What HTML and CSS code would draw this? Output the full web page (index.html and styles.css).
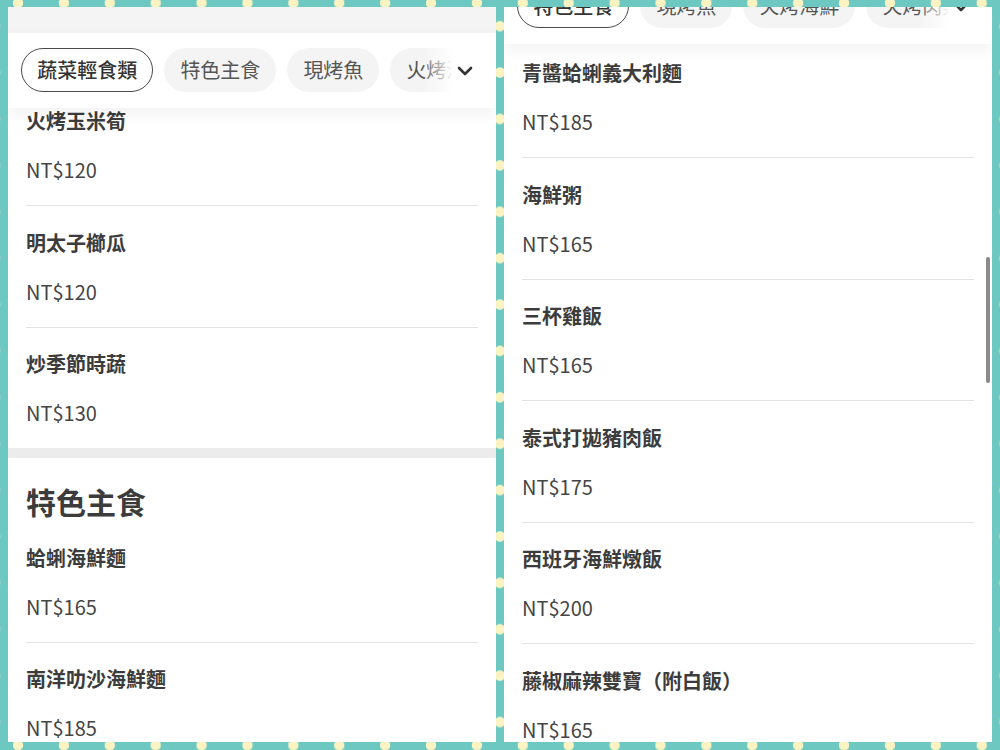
FILE: index.html
```html
<!DOCTYPE html>
<html lang="zh-Hant">
<head>
<meta charset="utf-8">
<title>菜單</title>
<link rel="stylesheet" href="styles.css">
</head>
<body>
<div class="frame">
  <section class="panel">
    <div class="page-top"></div>
    <header class="tabs">
      <div class="tab-track">
        <span class="chip chip--active">蔬菜輕食類</span>
        <span class="chip">特色主食</span>
        <span class="chip">現烤魚</span>
        <span class="chip">火烤海鮮</span>
        <span class="chip">火烤肉類</span>
      </div>
      <div class="tabs-fade">
        <svg class="chevron" width="16" height="10" viewBox="0 0 16 10"><path d="M2 2 L8 8 L14 2" fill="none" stroke="#333" stroke-width="2.6" stroke-linecap="round" stroke-linejoin="round"/></svg>
      </div>
    </header>
    <div class="menu menu--left">
      <section class="cat">
        <div class="item"><div class="item-name">火烤玉米筍</div><div class="item-price">NT$120</div></div>
        <div class="item"><div class="item-name">明太子櫛瓜</div><div class="item-price">NT$120</div></div>
        <div class="item"><div class="item-name">炒季節時蔬</div><div class="item-price">NT$130</div></div>
      </section>
      <section class="cat cat--titled">
        <h2 class="cat-title">特色主食</h2>
        <div class="item"><div class="item-name">蛤蜊海鮮麵</div><div class="item-price">NT$165</div></div>
        <div class="item"><div class="item-name">南洋叻沙海鮮麵</div><div class="item-price">NT$185</div></div>
      </section>
    </div>
  </section>

  <section class="panel">
    <header class="tabs tabs--scrolled">
      <div class="tab-track">
        <span class="chip chip--active">特色主食</span>
        <span class="chip">現烤魚</span>
        <span class="chip">火烤海鮮</span>
        <span class="chip">火烤肉類</span>
      </div>
      <div class="tabs-fade">
        <svg class="chevron" width="16" height="10" viewBox="0 0 16 10"><path d="M2 2 L8 8 L14 2" fill="none" stroke="#333" stroke-width="2.6" stroke-linecap="round" stroke-linejoin="round"/></svg>
      </div>
    </header>
    <div class="menu menu--right">
      <section class="cat">
        <div class="item"><div class="item-name">青醬蛤蜊義大利麵</div><div class="item-price">NT$185</div></div>
        <div class="item"><div class="item-name">海鮮粥</div><div class="item-price">NT$165</div></div>
        <div class="item"><div class="item-name">三杯雞飯</div><div class="item-price">NT$165</div></div>
        <div class="item"><div class="item-name">泰式打拋豬肉飯</div><div class="item-price">NT$175</div></div>
        <div class="item"><div class="item-name">西班牙海鮮燉飯</div><div class="item-price">NT$200</div></div>
        <div class="item"><div class="item-name">藤椒麻辣雙寶（附白飯）</div><div class="item-price">NT$165</div></div>
      </section>
    </div>
    <div class="scrollbar"></div>
  </section>
</div>
</body>
</html>
```

FILE: styles.css
```css
* { box-sizing: border-box; }

html, body {
  margin: 0;
  height: 100%;
}

body {
  background-color: #6dc8c1;
  background-image:
    radial-gradient(circle at center, #fbf4c2 0, #fbf4c2 4.8px, rgba(251,244,194,0) 5.6px),
    radial-gradient(circle at center, #fbf4c2 0, #fbf4c2 4.8px, rgba(251,244,194,0) 5.6px);
  background-size: 45.9px 46.4px, 45.9px 46.4px;
  background-position: -4.95px -20.2px, 18.05px 3px;
  font-family: "Noto Sans CJK TC", "Noto Sans", sans-serif;
  color: #3c3c3c;
}

.frame {
  height: 750px;
  padding: 7px 8px 8px;
  display: grid;
  grid-template-columns: 1fr 1fr;
  column-gap: 8px;
}

.panel {
  position: relative;
  background: #fff;
  overflow: hidden;
  height: 735px;
}

.page-top {
  height: 26px;
  background: #f4f4f4;
}

.tabs {
  position: relative;
  z-index: 2;
  height: 75px;
  padding: 15px 0 16px 13px;
  background: #fff;
  box-shadow: 0 6px 14px rgba(0, 0, 0, 0.055);
}

.tabs--scrolled {
  margin-top: -38px;
}

.tab-track {
  display: flex;
  gap: 11px;
  overflow: hidden;
  white-space: nowrap;
}

.chip {
  flex-shrink: 0;
  height: 44px;
  padding: 0 16px;
  border-radius: 22px;
  background: #f4f4f4;
  color: #555;
  font-size: 20px;
  line-height: 44px;
  font-weight: 400;
}

.chip--active {
  background: #fff;
  border: 1.3px solid #4a4a4a;
  padding: 0 15.2px;
  line-height: 41.4px;
  color: #333;
  font-weight: 500;
}

.tabs-fade {
  position: absolute;
  top: 0;
  right: 0;
  bottom: 0;
  width: 74px;
  display: flex;
  align-items: center;
  justify-content: flex-end;
  padding-right: 23px;
  background: linear-gradient(to right, rgba(255,255,255,0) 0%, #fff 42%);
}

.chevron {
  display: block;
}

.menu {
  position: relative;
  z-index: 1;
}

.menu--left {
  margin-top: -23.5px;
}

.menu--right {
  margin-top: -7.5px;
}

.cat {
  padding: 0 18px 0 18px;
}

.cat--titled {
  border-top: 10px solid #ececec;
  padding-top: 23px;
}

.cat-title {
  margin: 0;
  font-size: 30px;
  line-height: 40px;
  font-weight: 700;
  color: #3c3c3c;
}

.item {
  padding: 23.5px 0 22px;
  border-bottom: 1px solid #e3e3e3;
  display: flex;
  flex-direction: column;
  gap: 23px;
}

.item:last-child {
  border-bottom: none;
}

.item-name {
  font-size: 20px;
  line-height: 26px;
  font-weight: 700;
  color: #3c3c3c;
}

.item-price {
  font-size: 20px;
  line-height: 26px;
  font-weight: 400;
  color: #454545;
}

.scrollbar {
  position: absolute;
  right: 2px;
  top: 250px;
  width: 4px;
  height: 126px;
  border-radius: 2px;
  background: #8a8a8a;
  z-index: 3;
}
```
